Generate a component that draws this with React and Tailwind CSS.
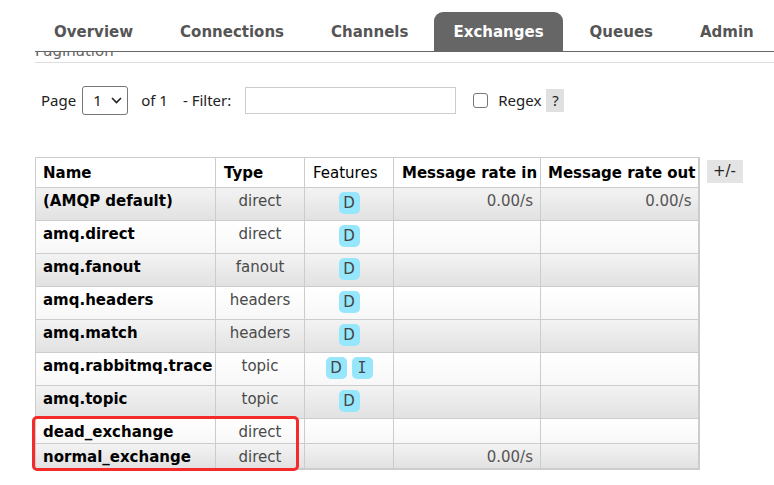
import React from 'react';

const tabs = ['Overview', 'Connections', 'Channels', 'Exchanges', 'Queues', 'Admin'];

const rows = [
  { name: '(AMQP default)', type: 'direct', features: ['D'], rateIn: '0.00/s', rateOut: '0.00/s' },
  { name: 'amq.direct', type: 'direct', features: ['D'] },
  { name: 'amq.fanout', type: 'fanout', features: ['D'] },
  { name: 'amq.headers', type: 'headers', features: ['D'] },
  { name: 'amq.match', type: 'headers', features: ['D'] },
  { name: 'amq.rabbitmq.trace', type: 'topic', features: ['D', 'I'] },
  { name: 'amq.topic', type: 'topic', features: ['D'] },
  { name: 'dead_exchange', type: 'direct', features: [] },
  { name: 'normal_exchange', type: 'direct', features: [], rateIn: '0.00/s' },
];

const Badge = ({ children }) => (
  <span
    className={`inline-flex h-[22px] w-[21px] items-center justify-center rounded-[5px] bg-[#96e6fc] text-[15px] leading-none text-[#444] ${
      children === 'I' ? "font-['DejaVu_Sans_Mono',monospace]" : ''
    }`}
  >
    {children}
  </span>
);

const App = () => {
  return (
    <div className="h-[485px] w-[774px] overflow-hidden bg-white font-['DejaVu_Sans',sans-serif]">
      <div className="ml-[35px]">
        {/* Tabs */}
        <nav className="flex h-[52px] items-end border-b border-[#666]">
          {tabs.map((t, i) => (
            <div
              key={t}
              className={`mr-[7px] flex h-[39px] items-center rounded-t-[9px] px-5 pt-[1px] text-[15px] font-bold ${
                t === 'Exchanges' ? '-ml-px mr-[5px] bg-[#666] px-[19px] text-white' : 'text-[#555]'
              } ${i === 0 ? '-ml-px' : ''}`}
            >
              {t}
            </div>
          ))}
        </nav>

        {/* Pagination heading, scrolled under the tabs */}
        <div className="h-[11px] overflow-hidden border-b border-[#ddd]">
          <div className="-mt-[10px] text-[15px] leading-[18px] text-[#666]">Pagination</div>
        </div>

        {/* Page / filter row */}
        <div className="mt-[23px] flex h-[29px] items-center font-['Noto_Sans',sans-serif] text-[15px] text-[#222]">
          <span className="ml-[6px]">Page</span>
          <div className="ml-[6px] flex h-[29px] w-[46px] items-center rounded-[3px] border border-[#767676] bg-white pl-[10px]">
            <span>1</span>
            <svg className="ml-[9px]" width="11" height="7" viewBox="0 0 11 7">
              <path d="M1 1l4.5 4.5L10 1" fill="none" stroke="#222" strokeWidth="1.6" />
            </svg>
          </div>
          <span className="ml-[13px]">of 1</span>
          <span className="ml-[15px]">- Filter:</span>
          <div className="ml-[14px] h-[27px] w-[211px] border border-[#ccc] bg-white" />
          <div className="ml-[17px] h-[15px] w-[15px] rounded-[3px] border border-[#767676] bg-white" />
          <span className="ml-[10px]">Regex</span>
          <span className="ml-[5px] flex h-[23px] w-[18px] items-center justify-center bg-[#e0e0e0]">?</span>
        </div>

        {/* Table */}
        <div className="mt-[42px] flex items-start">
          <div className="relative">
            <table className="w-[663px] table-fixed border-collapse text-[15px] leading-[18px]">
              <colgroup>
                <col className="w-[180px]" />
                <col className="w-[89px]" />
                <col className="w-[89px]" />
                <col className="w-[147px]" />
                <col className="w-[158px]" />
              </colgroup>
              <thead>
                <tr className="h-[30px] bg-white text-left text-black">
                  <th className="border border-[#ccc] px-[7px] font-bold">Name</th>
                  <th className="border border-[#ccc] px-[8px] font-bold">Type</th>
                  <th className="border border-[#ccc] px-[8px] font-normal">Features</th>
                  <th className="whitespace-nowrap border border-[#ccc] px-[8px] font-bold">Message rate in</th>
                  <th className="whitespace-nowrap border border-[#ccc] border-r-2 px-[7px] font-bold">Message rate out</th>
                </tr>
              </thead>
              <tbody>
                {rows.map((r, i) => {
                  const tall = r.features.length > 0;
                  const last = i === rows.length - 1;
                  return (
                    <tr
                      key={r.name}
                      className={`${tall ? 'h-[33px]' : 'h-[25px]'} ${
                        i % 2 === 0
                          ? 'bg-linear-to-b from-[#f3f3f3] to-[#e1e1e1]'
                          : 'bg-linear-to-b from-white to-[#f7f7f7]'
                      }`}
                    >
                      <td className={`border border-[#ccc] px-[7px] pt-[4px] align-top font-bold whitespace-nowrap text-black ${last ? 'border-b-2' : ''}`}>
                        {r.name}
                      </td>
                      <td className={`border border-[#ccc] pt-[4px] text-center align-top text-[#4a4a4a] ${last ? 'border-b-2' : ''}`}>
                        {r.type}
                      </td>
                      <td className={`border border-[#ccc] pt-[4px] text-center align-top ${last ? 'border-b-2' : ''}`}>
                        <div className="flex justify-center gap-[5px]">
                          {r.features.map((f) => (
                            <Badge key={f}>{f}</Badge>
                          ))}
                        </div>
                      </td>
                      <td className={`border border-[#ccc] px-[7px] pt-[4px] text-right align-top text-[#555] ${last ? 'border-b-2' : ''}`}>
                        {r.rateIn}
                      </td>
                      <td className={`border border-[#ccc] border-r-2 px-[6px] pt-[4px] text-right align-top text-[#555] ${last ? 'border-b-2' : ''}`}>
                        {r.rateOut}
                      </td>
                    </tr>
                  );
                })}
              </tbody>
            </table>
            {/* Red highlight annotation */}
            <div className="pointer-events-none absolute left-[-3px] top-[259px] h-[55px] w-[267px] rounded-[5px] border-[3px] border-[#f52a2a]" />
          </div>
          <span className="ml-[7px] mt-[3px] flex h-[23px] w-[36px] items-center justify-center bg-[#e4e4e4] text-[15px] text-[#222]">
            +/-
          </span>
        </div>

        <div className="mt-[15px] border-t-2 border-[#f0f0f0]" />
      </div>
    </div>
  );
};

export default App;
